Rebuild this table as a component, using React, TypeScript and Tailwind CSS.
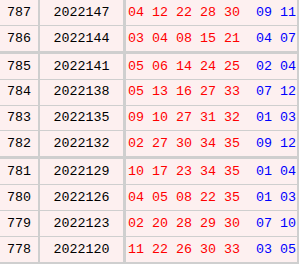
import React from 'react';

type Row = { id: string; issue: string; red: string[]; blue: string[]; thick?: boolean };

const rows: Row[] = [
  { id: '787', issue: '2022147', red: ['04', '12', '22', '28', '30'], blue: ['09', '11'] },
  { id: '786', issue: '2022144', red: ['03', '04', '08', '15', '21'], blue: ['04', '07'], thick: true },
  { id: '785', issue: '2022141', red: ['05', '06', '14', '24', '25'], blue: ['02', '04'] },
  { id: '784', issue: '2022138', red: ['05', '13', '16', '27', '33'], blue: ['07', '12'] },
  { id: '783', issue: '2022135', red: ['09', '10', '27', '31', '32'], blue: ['01', '03'] },
  { id: '782', issue: '2022132', red: ['02', '27', '30', '34', '35'], blue: ['09', '12'], thick: true },
  { id: '781', issue: '2022129', red: ['10', '17', '23', '34', '35'], blue: ['01', '04'] },
  { id: '780', issue: '2022126', red: ['04', '05', '08', '22', '35'], blue: ['01', '03'] },
  { id: '779', issue: '2022123', red: ['02', '20', '28', '29', '30'], blue: ['07', '10'] },
  { id: '778', issue: '2022120', red: ['11', '22', '26', '30', '33'], blue: ['03', '05'] },
];

export default function App() {
  return (
    <div
      className="w-[299px] h-[264px] bg-white border-b-2 border-[#cfcfcf] overflow-hidden text-[13.34px] leading-none text-black"
      style={{ fontFamily: "'Liberation Mono', 'DejaVu Sans Mono', monospace" }}
    >
      {rows.map((r, i) => (
        <div
          key={r.id}
          className={
            'flex h-[24.9px] box-content bg-[#fdf0f0] ' +
            (i === rows.length - 1
              ? ''
              : r.thick
              ? 'border-b-[3px] border-[#cfcfcf]'
              : 'border-b border-[#cfcfcf]')
          }
        >
          <div className="w-[40px] shrink-0 flex items-center justify-center border-r-2 border-[#cfcfcf]">
            {r.id}
          </div>
          <div className="w-[86px] shrink-0 flex items-center justify-center border-r-[3px] border-[#cfcfcf]">
            {r.issue}
          </div>
          <div className="flex-1 flex items-center pl-[2px] border-r-2 border-[#cfcfcf] whitespace-pre">
            <span className="text-[#ff0000]">{r.red.join(' ')}</span>
            <span className="text-[#0000ff]">{'  ' + r.blue.join(' ')}</span>
          </div>
        </div>
      ))}
    </div>
  );
}
